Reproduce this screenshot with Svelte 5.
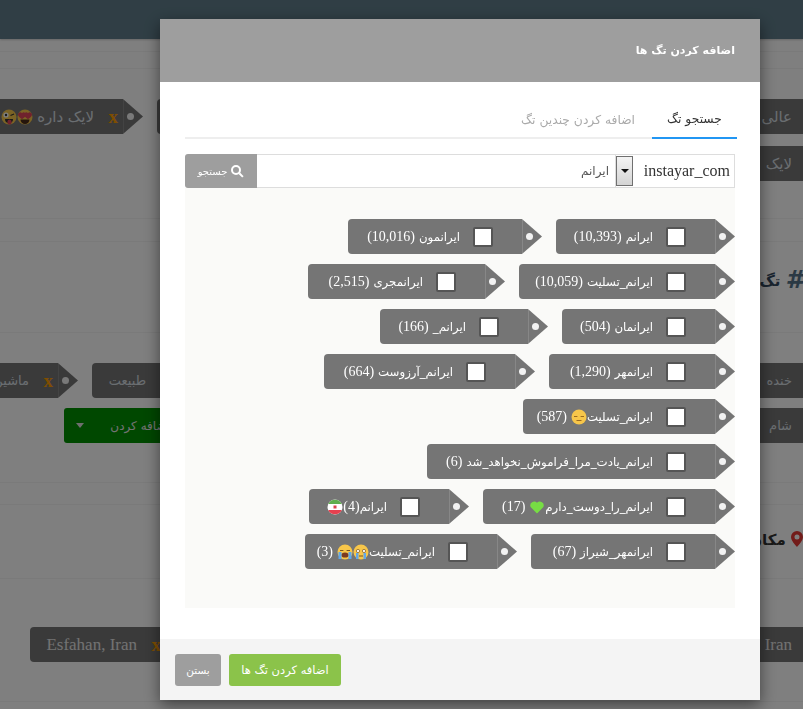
<script>
  const rows = [
    [
      { name: 'ایرانم', count: '(10,393)', width: 179 },
      { name: 'ایرانمون', count: '(10,016)', width: 194 }
    ],
    [
      { name: 'ایرانم_تسلیت', count: '(10,059)', width: 216 },
      { name: 'ایرانمجری', count: '(2,515)', width: 197 }
    ],
    [
      { name: 'ایرانمان', count: '(504)', width: 173 },
      { name: 'ایرانم_', count: '(166)', width: 168 }
    ],
    [
      { name: 'ایرانمهر', count: '(1,290)', width: 186 },
      { name: 'ایرانم_آرزوست', count: '(664)', width: 211 }
    ],
    [{ name: 'ایرانم_تسلیت', emoji: ['pensive'], count: '(587)', width: 212 }],
    [{ name: 'ایرانم_یادت_مرا_فراموش_نخواهد_شد', count: '(6)', width: 308 }],
    [
      { name: 'ایرانم_را_دوست_دارم', emoji: ['heart'], count: '(17)', width: 252 },
      { name: 'ایرانم', count: '(4)', after: ['flag'], width: 160, tight: true }
    ],
    [
      { name: 'ایرانمهر_شیراز', count: '(67)', width: 204 },
      { name: 'ایرانم_تسلیت', emoji: ['cry', 'sad'], count: '(3)', width: 212 }
    ]
  ];
</script>

{#snippet emoji(kind)}
  <svg class="emoji" viewBox="0 0 16 16" aria-hidden="true">
    {#if kind === 'heart'}
      <path d="M8 14.5 1.6 8A3.9 3.9 0 0 1 8 3.8 3.9 3.9 0 0 1 14.4 8z" fill="#77dd44" />
    {:else if kind === 'flag'}
      <circle cx="8" cy="8" r="7.5" fill="#fff" />
      <path d="M1.2 5A7.5 7.5 0 0 1 14.8 5z" fill="#5fae4e" />
      <path d="M1.2 11A7.5 7.5 0 0 0 14.8 11z" fill="#e5404f" />
      <rect x="6.5" y="6.5" width="3" height="3" fill="#d9434e" />
    {:else}
      <circle cx="8" cy="8" r="7.5" fill="#f7c64a" />
      {#if kind === 'pensive'}
        <path d="M3 7.500h3.400M9.600 7.500H13M5.500 11.500h5" stroke="#9a6a20" stroke-width="1.200" fill="none" />
      {:else if kind === 'sad'}
        <path d="M3 6.500h3.400M9.600 6.500H13" stroke="#7b5520" stroke-width="1.200" />
        <ellipse cx="8" cy="11" rx="3.600" ry="2.600" fill="#7b3a20" />
        <path d="M1.500 8h3v7h-3zM11.500 8h3v7h-3z" fill="#62a8e8" />
      {:else if kind === 'cry'}
        <circle cx="5" cy="7" r="1.600" fill="#fff" stroke="#7b5520" stroke-width=".7" />
        <circle cx="11" cy="7" r="1.600" fill="#fff" stroke="#7b5520" stroke-width=".7" />
        <path d="M6 12h4" stroke="#7b5520" stroke-width="1.200" />
        <path d="M3 9h2.500v6H3zM10.500 9H13v6h-2.500z" fill="#62a8e8" />
      {:else if kind === 'wink'}
        <circle cx="5" cy="6" r="2.600" fill="#fff" />
        <circle cx="5" cy="6" r="1.200" fill="#333" />
        <path d="M9.500 6.500 13 5" stroke="#333" stroke-width="1.200" />
        <path d="M4 10h8a4 4 0 0 1-8 0z" fill="#333" />
        <ellipse cx="8.500" cy="13" rx="2.200" ry="2.600" fill="#e0455a" />
      {:else if kind === 'hearts'}
        <path d="M1 5.500a2.200 2.200 0 0 1 4-1.200 2.200 2.200 0 0 1 4 1.200C9 8 5 10 5 10S1 8 1 5.500z" fill="#e0455a" />
        <path d="M7 5.500a2.200 2.200 0 0 1 4-1.200 2.200 2.200 0 0 1 4 1.200C15 8 11 10 11 10S7 8 7 5.500z" fill="#e0455a" />
        <path d="M3.500 10.500h9a4.500 4.500 0 0 1-9 0z" fill="#4a2a18" />
      {/if}
    {/if}
  </svg>
{/snippet}

{#snippet backTag(width, text, latin = false, icons = [])}
  <div class="back-tag" style="width:{width}px">
    <span class="tip"><i></i></span>
    <span class="body">
      {#if text}
        <b class="x">x</b>
        <span class={latin ? 'back-latin' : 'back-fa'}>{text}</span>
      {/if}
      {#each icons as icon}{@render emoji(icon)}{/each}
    </span>
  </div>
{/snippet}

<div class="page">
  <div class="topbar"></div>
  <div class="band thin"></div>
  <div class="band short"></div>

  <section class="tags first">
    <div class="tag-row">
      {@render backTag(127, 'عالی بود')}
      {@render backTag(543, '')}
      {@render backTag(170, 'لایک داره', false, ['hearts', 'wink'])}
    </div>
    <div class="tag-row">
      {@render backTag(127, 'لایک')}
    </div>
  </section>
  <div class="band gap"></div>

  <section class="title hash-title">
    <h3><span class="hash">#</span> تگ ها</h3>
  </section>

  <section class="tags second">
    <div class="tag-row">
      {@render backTag(127, 'خنده')}
      {@render backTag(491, '')}
      {@render backTag(103, 'طبیعت')}
      {@render backTag(120, 'ماشین')}
    </div>
    <div class="tag-row">
      {@render backTag(127, 'شام')}
      <button class="add-btn" type="button">اضافه کردن <span class="caret"></span></button>
    </div>
  </section>
  <div class="band gap2"></div>

  <section class="title place-title">
    <h3>
      <svg class="pin" viewBox="0 0 12 16"><path fill-rule="evenodd" d="M6 0a6 6 0 0 1 6 6c0 3.500-4 7.500-6 10C4 13.500 0 9.500 0 6a6 6 0 0 1 6-6zm0 3.500a2.500 2.500 0 1 0 0 5 2.500 2.500 0 0 0 0-5z" /></svg>
      مکان ها
    </h3>
  </section>

  <section class="tags third">
    <div class="tag-row">
      {@render backTag(127, 'Iran', true)}
      {@render backTag(500, '', true)}
      {@render backTag(156, 'Esfahan, Iran', true)}
    </div>
  </section>
</div>

<div class="overlay"></div>

<div class="modal" dir="rtl">
  <header class="modal-head">
    <h4>اضافه کردن تگ ها</h4>
  </header>

  <div class="modal-body">
    <div class="tabs">
      <button class="tab active" type="button">جستجو تگ</button>
      <button class="tab" type="button">اضافه کردن چندین تگ</button>
    </div>

    <div class="search">
      <div class="fake-select">
        <span class="account">instayar_com</span>
        <span class="arrow-btn"><i></i></span>
      </div>
      <input class="query" value="ایرانم" />
      <button class="search-btn" type="button">
        <svg viewBox="0 0 14 14"><path d="M6 1a5 5 0 1 0 0 10A5 5 0 0 0 6 1zm0 2a3 3 0 1 1 0 6 3 3 0 0 1 0-6z" fill-rule="evenodd" /><path d="m8.600 9.900 1.400-1.400 3.600 3.700-1.400 1.400z" /></svg>
        جستجو
      </button>
    </div>

    <div class="results">
      {#each rows as row}
        <div class="result-row">
          {#each row as tag}
            <label class="tag" style="width:{tag.width}px">
              <span class="tip"><i></i></span>
              <span class="body">
                <input type="checkbox" />
                <span class="fa">{tag.name}</span>
                {#each tag.emoji ?? [] as kind}{@render emoji(kind)}{/each}
                <span class="num" class:tight={tag.tight}>{tag.count}</span>
                {#each tag.after ?? [] as kind}{@render emoji(kind)}{/each}
              </span>
            </label>
          {/each}
        </div>
      {/each}
    </div>
  </div>

  <footer class="modal-foot">
    <button class="btn green" type="button">اضافه کردن تگ ها</button>
    <button class="btn gray" type="button">بستن</button>
  </footer>
</div>

<style>
  :global(body) {
    margin: 0;
    background: #fff;
    overflow: hidden;
  }
  .page {
    width: 803px;
    height: 709px;
    overflow: hidden;
    background: #fff;
    font-family: "Liberation Serif", serif;
  }
  .topbar {
    height: 39px;
    background: #607d8b;
    box-shadow: 0 1px 2px rgba(0, 0, 0, 0.2);
  }
  .band {
    border-bottom: 1px solid #f4f4f4;
    box-sizing: border-box;
  }
  .thin { height: 13px; }
  .short { height: 17px; }
  .gap { height: 23px; }
  .gap2 { height: 22px; }
  .tags {
    box-sizing: border-box;
    display: flex;
    flex-direction: column;
    border-bottom: 1px solid #f4f4f4;
  }
  .first { height: 150px; padding-top: 30px; gap: 12px; }
  .second { height: 150px; padding-top: 30px; gap: 10px; }
  .third { height: 123px; padding-top: 48px; }
  .tag-row {
    direction: rtl;
    display: flex;
    gap: 14px;
    margin-right: -38px;
    margin-left: -300px;
  }
  .back-tag,
  .tag {
    display: flex;
    height: 35px;
    flex: none;
    color: #fff;
  }
  .tip {
    flex: none;
    position: relative;
    width: 20px;
    background: linear-gradient(to right, #878787 1px, #757575 1px);
    clip-path: polygon(0 0, 100% 50%, 0 100%);
  }
  .tip i {
    position: absolute;
    right: 9px;
    top: 14px;
    width: 7px;
    height: 7px;
    border-radius: 50%;
    background: #f2f2f2;
  }
  .body {
    flex: 1;
    min-width: 0;
    display: flex;
    align-items: center;
    background: #757575;
    border-radius: 4px 0 0 4px;
    overflow: hidden;
    white-space: nowrap;
  }
  .back-tag .body {
    padding-right: 5px;
  }
  .x {
    flex: none;
    width: 10px;
    margin-left: 14px;
    color: #ff9d00;
    font: bold 19px "Liberation Serif", serif;
    line-height: 1;
  }
  .back-fa {
    color: #d5dde2;
    font: 15px "DejaVu Sans", sans-serif;
    margin-left: 4px;
  }
  .second .back-fa {
    font-size: 13px;
  }
  .back-latin {
    color: #e4e4e4;
    font-size: 17px;
    direction: ltr;
  }
  .title {
    box-sizing: border-box;
    display: flex;
    justify-content: flex-end;
    direction: ltr;
    overflow: hidden;
    border-bottom: 1px solid #f4f4f4;
  }
  .title h3 {
    margin: 0;
    direction: rtl;
    color: #34495e;
    font: bold 15px "DejaVu Sans", sans-serif;
    white-space: nowrap;
  }
  .hash-title { height: 91px; padding-top: 24px; }
  .place-title { height: 74px; padding-top: 26px; color: #333; }
  .hash {
    display: inline-block;
    color: #557388;
    font-size: 25px;
    font-style: italic;
    line-height: 28px;
    vertical-align: -2px;
  }
  .place-title h3 { color: #333; }
  .pin {
    width: 12px;
    height: 16px;
    fill: #e53935;
    vertical-align: -2px;
  }
  .add-btn {
    flex: none;
    box-sizing: border-box;
    width: 215px;
    height: 35px;
    margin-right: 421px;
    padding: 0 109px 0 12px;
    border: 0;
    border-radius: 3px;
    background: #009000;
    color: #e5e5e5;
    font: 12px "DejaVu Sans", sans-serif;
    display: flex;
    justify-content: space-between;
    align-items: center;
    white-space: nowrap;
  }
  .caret {
    border-top: 5px solid #ddd;
    border-left: 4px solid transparent;
    border-right: 4px solid transparent;
  }
  .overlay {
    position: fixed;
    inset: 0;
    background: rgba(0, 0, 0, 0.5);
  }
  .modal {
    position: fixed;
    left: 160px;
    top: 19px;
    width: 600px;
    height: 681px;
    display: flex;
    flex-direction: column;
    background: #fff;
    box-shadow: 0 5px 15px rgba(0, 0, 0, 0.5);
    font-family: "DejaVu Sans", sans-serif;
  }
  .modal-head {
    flex: none;
    height: 63px;
    box-sizing: border-box;
    padding: 0 25px;
    display: flex;
    align-items: center;
    background: #9e9e9e;
  }
  .modal-head h4 {
    margin: 0;
    color: #fff;
    font-size: 11px;
    font-weight: bold;
  }
  .modal-body {
    flex: 1;
    padding: 18px 23px 0 25px;
  }
  .tabs {
    display: flex;
    height: 39px;
    border-bottom: 2px solid #eee;
    box-sizing: border-box;
    width: 552px;
  }
  .tab {
    border: 0;
    background: none;
    padding: 0 17px;
    height: 39px;
    color: #aaa;
    font: 12.300px "DejaVu Sans", sans-serif;
    margin-bottom: -2px;
    white-space: nowrap;
  }
  .tab.active {
    width: 85px;
    padding: 0;
    color: #333;
    border-bottom: 2px solid #2196f3;
  }
  .search {
    display: flex;
    height: 34px;
    margin-top: 15px;
    margin-right: 2px;
    width: 550px;
  }
  .fake-select {
    box-sizing: border-box;
    flex: none;
    width: 120px;
    display: flex;
    align-items: center;
    padding: 1px 4px 1px 0;
    border: 1px solid #ddd;
    background: #fff;
  }
  .account {
    flex: 1;
    direction: ltr;
    text-align: right;
    color: #333;
    font: 16px "Liberation Serif", serif;
  }
  .arrow-btn {
    flex: none;
    box-sizing: border-box;
    width: 17px;
    height: 100%;
    border: 1px solid #707070;
    background: linear-gradient(#f4f4f4, #d4d4d4);
    display: flex;
    align-items: center;
    justify-content: center;
    order: 1;
  }
  .arrow-btn i {
    border-top: 4px solid #111;
    border-left: 4px solid transparent;
    border-right: 4px solid transparent;
  }
  .query {
    box-sizing: border-box;
    flex: 1;
    min-width: 0;
    height: 34px;
    border: 1px solid #ddd;
    border-right: 0;
    border-left: 0;
    padding: 0 6px;
    outline: none;
    color: #555;
    font: 12px "DejaVu Sans", sans-serif;
  }
  .search-btn {
    flex: none;
    width: 72px;
    height: 34px;
    border: 0;
    border-radius: 3px 0 0 3px;
    background: #9e9e9e;
    color: #fff;
    font: 10px "DejaVu Sans", sans-serif;
    display: flex;
    align-items: center;
    justify-content: center;
    gap: 3px;
    padding: 0;
  }
  .search-btn svg {
    width: 14px;
    height: 14px;
    fill: #fff;
  }
  .results {
    box-sizing: border-box;
    width: 550px;
    height: 420px;
    margin-right: 2px;
    padding-top: 31px;
    background: #fafaf8;
    display: flex;
    flex-direction: column;
    gap: 10px;
  }
  .result-row {
    display: flex;
    gap: 14px;
  }
  .tag input {
    flex: none;
    appearance: none;
    box-sizing: border-box;
    width: 20px;
    height: 20px;
    margin: 0 29px 0 13px;
    border: 2.500px solid #555;
    border-radius: 2px;
    background: #fff;
  }
  .fa {
    font: 11.750px "DejaVu Sans", sans-serif;
    color: #fff;
  }
  .num {
    direction: ltr;
    margin-right: 4px;
    font: 14px "Liberation Serif", serif;
    color: #fff;
  }
  .num.tight { margin-right: 0; }
  .emoji {
    flex: none;
    width: 16px;
    height: 16px;
  }
  .modal-foot {
    flex: none;
    height: 61px;
    box-sizing: border-box;
    padding: 15px 15px 0 0;
    background: #f4f4f4;
    display: flex;
    gap: 8px;
  }
  .btn {
    height: 32px;
    border: 0;
    border-radius: 3px;
    color: #fff;
    font: 11.500px "DejaVu Sans", sans-serif;
    padding: 0;
  }
  .green { width: 112px; background: #8bc34a; margin-right: 404px; }
  .gray { width: 46px; background: #9e9e9e; font-size: 10.500px; }
</style>
